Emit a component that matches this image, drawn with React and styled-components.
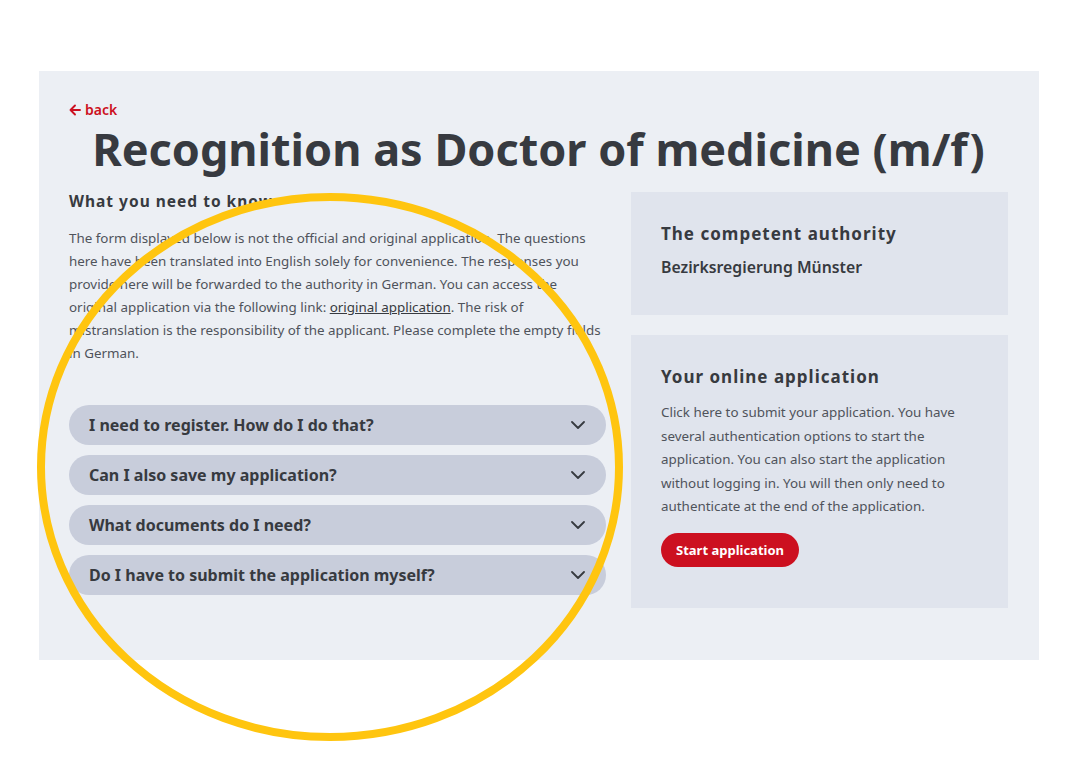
import React from "react";
import styled, { createGlobalStyle } from "styled-components";

const GlobalStyle = createGlobalStyle`
  body {
    margin: 0;
    background: #ffffff;
    font-family: "Noto Sans", "Open Sans", sans-serif;
    color: #373a40;
  }
`;

const Page = styled.div`
  position: relative;
  width: 1074px;
  height: 757px;
  padding: 71px 0 0 39px;
  box-sizing: border-box;
`;

const Panel = styled.section`
  width: 1000px;
  background: #eceff4;
  padding: 28px 31px 52px 30px;
  box-sizing: border-box;
`;

const Back = styled.a`
  display: inline-flex;
  align-items: center;
  gap: 4px;
  color: #cc1020;
  font-size: 14px;
  font-weight: 600;
  line-height: 18px;
  text-decoration: none;
`;

const Title = styled.h1`
  margin: 0 0 15px;
  text-align: center;
  font-size: 45px;
  font-weight: 700;
  line-height: 56px;
  color: #373a40;
`;

const Columns = styled.div`
  display: grid;
  grid-template-columns: 537px 377px;
  gap: 25px;
  align-items: start;
`;

const Main = styled.div`
  display: flex;
  flex-direction: column;
`;

const SectionHeading = styled.h2`
  margin: 0;
  font-size: ${(p) => p.$size || 15.5}px;
  line-height: ${(p) => (p.$size ? 24 : 19)}px;
  font-weight: 700;
  letter-spacing: 1px;
  color: #373a40;
`;

const Text = styled.p`
  margin: ${(p) => p.$margin || "16px 0 0"};
  font-size: 13.4px;
  line-height: ${(p) => p.$lh || 23}px;
  color: #4f535b;

  a {
    color: #373a40;
    text-decoration: underline;
  }
`;

const Accordion = styled.div`
  display: flex;
  flex-direction: column;
  gap: 10px;
  margin-top: 40px;
`;

const Question = styled.button`
  display: flex;
  align-items: center;
  justify-content: space-between;
  height: 40px;
  padding: 0 21px 0 20px;
  border: 0;
  border-radius: 20px;
  background: #c8cddb;
  font-family: inherit;
  font-size: 16px;
  font-weight: 700;
  color: #373a40;
  text-align: left;
`;

const Side = styled.aside`
  display: flex;
  flex-direction: column;
  gap: 20px;
`;

const Card = styled.div`
  background: #e0e4ed;
  padding: ${(p) => p.$padding};
`;

const Authority = styled.div`
  margin-top: 10px;
  font-size: 15.8px;
  font-weight: 600;
  line-height: 22px;
  color: #373a40;
`;

const StartButton = styled.button`
  margin-top: 14px;
  height: 34px;
  padding: 0 15px;
  border: 0;
  border-radius: 17px;
  background: #cc1020;
  color: #ffffff;
  font-family: inherit;
  font-size: 13px;
  font-weight: 700;
`;

const Marker = styled.svg`
  position: absolute;
  left: 0;
  top: 0;
  pointer-events: none;
`;

const Chevron = () => (
  <svg width="14" height="8" viewBox="0 0 14 8" fill="none">
    <path d="M1 1l6 6 6-6" stroke="#373a40" strokeWidth="1.8" strokeLinecap="round" strokeLinejoin="round" />
  </svg>
);

const ArrowLeft = () => (
  <svg width="12" height="12" viewBox="0 0 12 12" fill="none">
    <path d="M11 6H1.5M6 1.5L1.5 6 6 10.5" stroke="#cc1020" strokeWidth="1.9" strokeLinecap="round" strokeLinejoin="round" />
  </svg>
);

const questions = [
  "I need to register. How do I do that?",
  "Can I also save my application?",
  "What documents do I need?",
  "Do I have to submit the application myself?",
];

export default function App() {
  return (
    <>
      <GlobalStyle />
      <Page>
        <Panel>
          <Back href="#">
            <ArrowLeft />
            back
          </Back>
          <Title>Recognition as Doctor of medicine (m/f)</Title>
          <Columns>
            <Main>
              <SectionHeading>What you need to know</SectionHeading>
              <Text>
                The form displayed below is not the official and original application. The questions
                here have been translated into English solely for convenience. The responses you
                provide here will be forwarded to the authority in German. You can access the
                original application via the following link: <a href="#">original application</a>. The risk of
                mistranslation is the responsibility of the applicant. Please complete the empty fields
                in German.
              </Text>
              <Accordion>
                {questions.map((q) => (
                  <Question key={q}>
                    {q}
                    <Chevron />
                  </Question>
                ))}
              </Accordion>
            </Main>
            <Side>
              <Card $padding="30px 30px 37px">
                <SectionHeading $size={17}>The competent authority</SectionHeading>
                <Authority>Bezirksregierung Münster</Authority>
              </Card>
              <Card $padding="30px 30px 41px">
                <SectionHeading $size={17}>Your online application</SectionHeading>
                <Text $margin="12px 0 0" $lh={23.5}>
                  Click here to submit your application. You have several authentication options to
                  start the application. You can also start the application without logging in. You
                  will then only need to authenticate at the end of the application.
                </Text>
                <StartButton>Start application</StartButton>
              </Card>
            </Side>
          </Columns>
        </Panel>
        <Marker width="1074" height="757">
          <ellipse cx="330" cy="467" rx="289" ry="270" fill="none" stroke="#ffc50f" strokeWidth="8" />
        </Marker>
      </Page>
    </>
  );
}
